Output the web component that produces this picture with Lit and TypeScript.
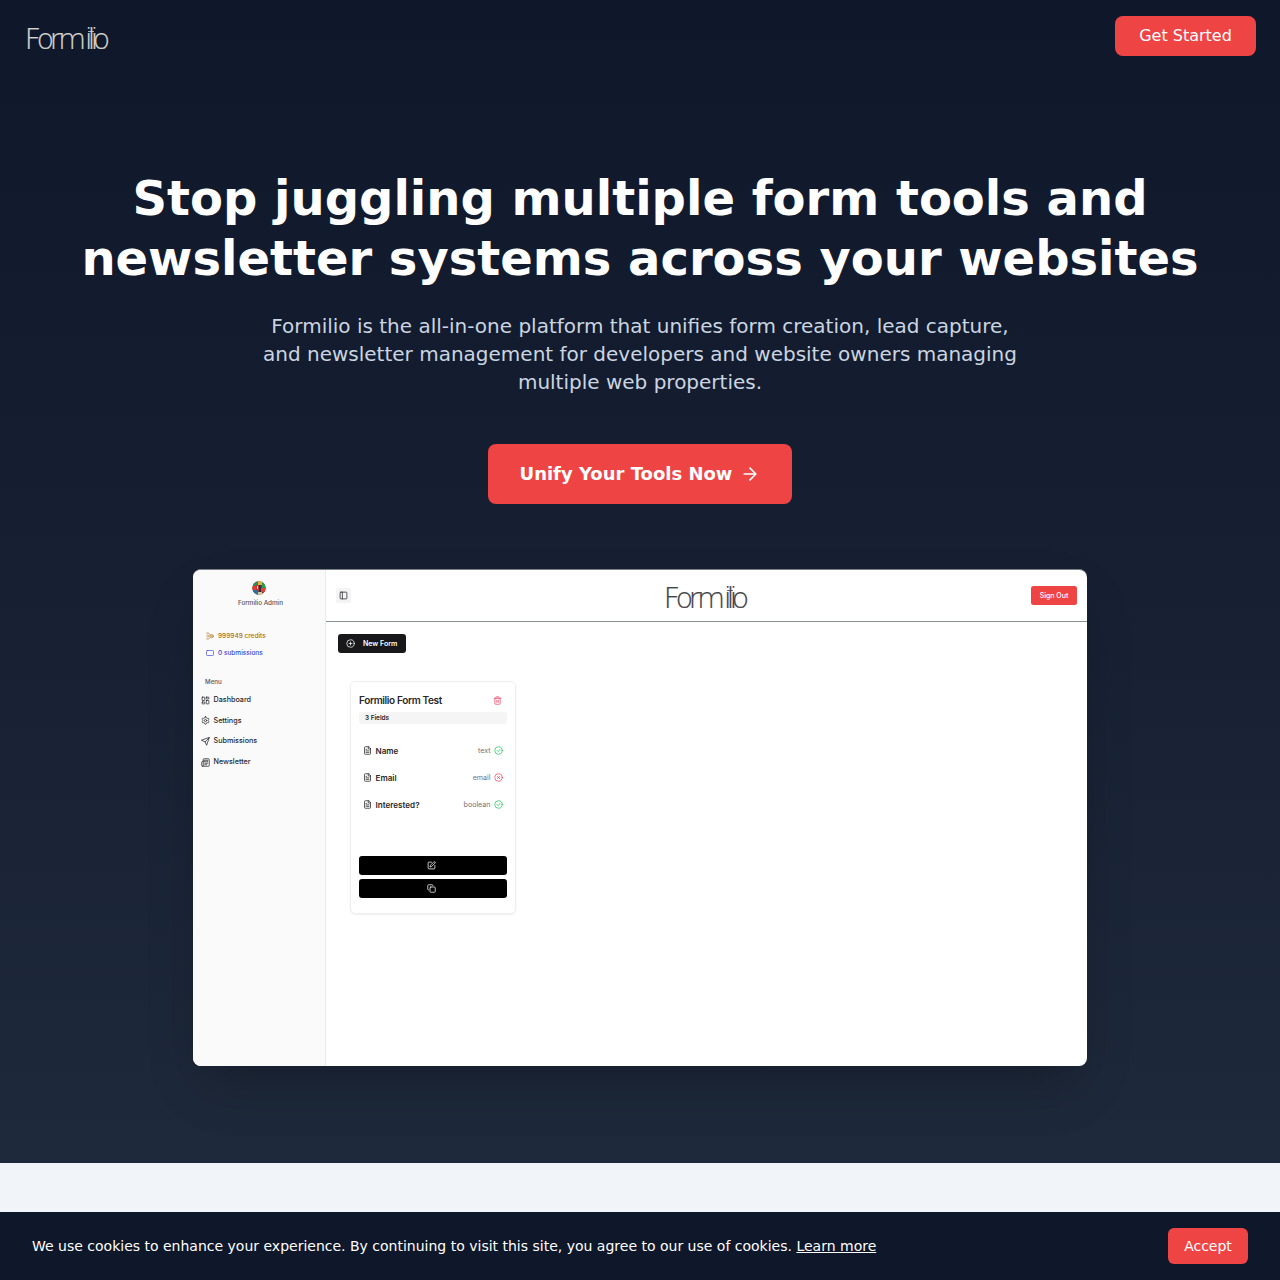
import { LitElement, html, css, svg } from "lit";
import { customElement, property } from "lit/decorators.js";

const ICONS: Record<string, any> = {
  arrow: svg`<path d="M5 12h14M12 5l7 7-7 7"/>`,
  panel: svg`<rect x="3" y="3" width="18" height="18" rx="2"/><path d="M9 3v18"/>`,
  plus: svg`<circle cx="12" cy="12" r="10"/><path d="M8 12h8M12 8v8"/>`,
  credits: svg`<circle cx="17" cy="12.500" r="5"/><path d="M2 3h4c4 0 3 4 6 5M2 21h5l5-4M2 12h3M6 8l4 4-4 4M17 11v3"/>`,
  ticket: svg`<rect x="1.500" y="4.500" width="21" height="15" rx="2.500"/>`,
  dashboard: svg`<rect x="3" y="3" width="7" height="9" rx="1"/><rect x="14" y="3" width="7" height="5" rx="1"/><rect x="14" y="12" width="7" height="9" rx="1"/><rect x="3" y="16" width="7" height="5" rx="1"/>`,
  settings: svg`<path d="M12.220 2h-.44a2 2 0 0 0-2 2v.18a2 2 0 0 1-1 1.730l-.43.25a2 2 0 0 1-2 0l-.15-.08a2 2 0 0 0-2.730.73l-.22.38a2 2 0 0 0 .73 2.730l.15.1a2 2 0 0 1 1 1.720v.51a2 2 0 0 1-1 1.740l-.15.09a2 2 0 0 0-.73 2.730l.22.38a2 2 0 0 0 2.730.73l.15-.08a2 2 0 0 1 2 0l.43.25a2 2 0 0 1 1 1.730V20a2 2 0 0 0 2 2h.44a2 2 0 0 0 2-2v-.18a2 2 0 0 1 1-1.730l.43-.25a2 2 0 0 1 2 0l.15.08a2 2 0 0 0 2.730-.73l.22-.39a2 2 0 0 0-.73-2.730l-.15-.08a2 2 0 0 1-1-1.740v-.5a2 2 0 0 1 1-1.740l.15-.09a2 2 0 0 0 .73-2.730l-.22-.38a2 2 0 0 0-2.730-.73l-.15.08a2 2 0 0 1-2 0l-.43-.25a2 2 0 0 1-1-1.730V4a2 2 0 0 0-2-2z"/><circle cx="12" cy="12" r="3"/>`,
  send: svg`<path d="m22 2-7 20-4-9-9-4ZM22 2 11 13"/>`,
  news: svg`<path d="M4 22h16a2 2 0 0 0 2-2V4a2 2 0 0 0-2-2H8a2 2 0 0 0-2 2v16a2 2 0 0 1-4 0v-9c0-1.100.9-2 2-2h2M18 14h-8M15 18h-5M10 6h8v4h-8Z"/>`,
  trash: svg`<path d="M3 6h18M19 6v14a2 2 0 0 1-2 2H7a2 2 0 0 1-2-2V6M8 6V4a2 2 0 0 1 2-2h4a2 2 0 0 1 2 2v2M10 11v6M14 11v6"/>`,
  file: svg`<path d="M15 2H6a2 2 0 0 0-2 2v16a2 2 0 0 0 2 2h12a2 2 0 0 0 2-2V7ZM14 2v6h6M16 13H8M16 17H8M10 9H8"/>`,
  check: svg`<circle cx="12" cy="12" r="10"/><path d="m8 12 3 3 5-6"/>`,
  cross: svg`<circle cx="12" cy="12" r="10"/><path d="m15 9-6 6M9 9l6 6"/>`,
  edit: svg`<path d="M12 3H5a2 2 0 0 0-2 2v14a2 2 0 0 0 2 2h14a2 2 0 0 0 2-2v-7M18.400 2.600a2.100 2.100 0 0 1 3 3L12 15l-4 1 1-4Z"/>`,
  copy: svg`<rect x="8" y="8" width="14" height="14" rx="2"/><path d="M4 16a2 2 0 0 1-2-2V4a2 2 0 0 1 2-2h10a2 2 0 0 1 2 2"/>`,
};

const icon = (name: string, size = 9) => html`<svg class="icon" width=${size} height=${size} viewBox="0 0 24 24"
  fill="none" stroke="currentColor" stroke-width="2" stroke-linecap="round" stroke-linejoin="round">${ICONS[name]}</svg>`;

@customElement("brand-logo")
class BrandLogo extends LitElement {
  static styles = css`
    :host { display: block; width: 84px; height: 30px; }
    svg { display: block; overflow: visible; }
    .word { font: 200 29px "DejaVu Sans", Lato, sans-serif; fill: currentColor; stroke: currentColor; stroke-width: 0.2; }
  `;
  render() {
    return html`<svg width="84" height="30" viewBox="0 0 84 30">
      <text class="word" y="25.200" x="-2.500 9.600 22.600 31 57.800 60.600 63.400 65.400">Formilio</text>
      <path d="M61 7.500h6" stroke="currentColor" stroke-width="0.800"/>
    </svg>`;
  }
}

@customElement("app-preview")
class AppPreview extends LitElement {
  static styles = css`
    :host { display: flex; box-sizing: border-box; width: 894px; height: 497px; border-radius: 8px; overflow: hidden; background: #fff; color: #27272a; font: 500 7.400px/10px Inter, sans-serif; text-align: left; border-top: 1px solid #7b8087; }
    .icon { display: block; flex: none; }
    .side { width: 133px; box-sizing: border-box; flex: none; background: #fafafa; border-right: 1px solid #e9eaec; }
    .user { display: flex; flex-direction: column; align-items: center; gap: 3px; padding: 11px 0 0 3px; font-size: 6.300px; color: #52525b; height: 56px; box-sizing: border-box; }
    .avatar { display: block; margin-right: 3px; }
    .stats { display: flex; flex-direction: column; gap: 7px; padding: 5px 0 0 12.500px; font-size: 6.500px; }
    .stat { display: flex; align-items: center; gap: 4.500px; }
    .gold { color: #a96f12; } .blue { color: #3546d8; }
    .caption { padding: 19px 0 0 12px; font-size: 6.200px; color: #52525b; }
    .menu { display: flex; flex-direction: column; gap: 10.700px; padding: 8px 0 0 8px; }
    .item { display: flex; align-items: center; gap: 3.500px; font-size: 7.200px; }
    .main { flex: 1; display: flex; flex-direction: column; }
    .bar { height: 52px; box-sizing: border-box; display: grid; grid-template-columns: 1fr 84px 1fr; align-items: center; border-bottom: 1px solid #8b9097; padding: 0 10px 0 10px; }
    .toggle { display: grid; place-items: center; width: 15px; height: 15px; background: #f4f4f5; border-radius: 2px; }
    .logo { color: #3f4447; position: relative; top: 2px; left: 1px; }
    .out { justify-self: end; background: #ef4444; color: #fff; border-radius: 2.500px; width: 46px; height: 19px; line-height: 19px; text-align: center; font-size: 7px; }
    .body { padding: 12px 0 0 12px; }
    .new { width: 68px; height: 19px; display: flex; align-items: center; gap: 8px; padding-left: 8px; box-sizing: border-box; border-radius: 3px; background: #18181b; color: #fff; font-size: 7px; font-weight: 600; }
    .card { width: 166px; height: 233px; box-sizing: border-box; margin: 28px 0 0 12px; padding: 13px 8px 0 8px; border: 1px solid #eeeeef; border-radius: 5px; box-shadow: 0 1px 2px #0001; }
    .head { display: flex; justify-content: space-between; align-items: center; font-size: 10px; font-weight: 600; letter-spacing: -0.350px; padding-right: 5px; }
    .red { color: #ef4461; } .green { color: #22c55e; }
    .count { height: 12px; line-height: 13px; margin-top: 7px; padding-left: 6px; background: #f5f5f5; border-radius: 3px; font-size: 6.400px; font-weight: 600; }
    .fields { display: flex; flex-direction: column; gap: 17px; padding: 21.500px 4px 0 4px; height: 128px; box-sizing: border-box; }
    .field { display: flex; align-items: center; gap: 3.500px; height: 10px; }
    .name { flex: 1; font-size: 8.100px; font-weight: 600; }
    .type { font-size: 7.100px; font-weight: 400; color: #71717a; }
    .action { display: grid; place-items: center; height: 19px; margin-top: 4px; padding-right: 4px; background: #000; color: #fff; border-radius: 3px; }
  `;
  @property({ attribute: false }) menu = [["dashboard", "Dashboard"], ["settings", "Settings"], ["send", "Submissions"], ["news", "Newsletter"]];
  @property({ attribute: false }) fields: any[] = [["Name", "text", true], ["Email", "email", false], ["Interested?", "boolean", true]];

  render() {
    return html`
      <div class="side">
        <div class="user">
          <svg class="avatar" width="14" height="14" viewBox="0 0 14 14">
            <clipPath id="round"><circle cx="7" cy="7" r="6.700"/></clipPath>
            <g clip-path="url(#round)">
              <rect width="14" height="14" fill="#7b3b2e"/><rect width="6" height="5" fill="#2f8a58"/><rect x="6" width="4" height="4" fill="#e2b33a"/><rect x="10" y="1" width="4" height="6" fill="#279b50"/>
              <rect y="5" width="4" height="4" fill="#df3a2c"/><rect x="4" y="4" width="3" height="6" fill="#c73431"/><rect x="7" y="4" width="2" height="7" fill="#23343d"/><rect x="9" y="7" width="5" height="4" fill="#dc4435"/>
              <rect x="1" y="9" width="5" height="5" fill="#2672a0"/><rect x="6" y="11" width="4" height="3" fill="#d9c9a0"/><rect x="5" y="5" width="1" height="3" fill="#f0e0c8"/>
            </g>
          </svg>
          <span>Formilio Admin</span>
        </div>
        <div class="stats">
          <div class="stat gold">${icon("credits", 8)}<span>999949 credits</span></div>
          <div class="stat blue">${icon("ticket", 8)}<span>0 submissions</span></div>
        </div>
        <div class="caption">Menu</div>
        <div class="menu">${this.menu.map(([i, t]) => html`<div class="item">${icon(i, 9)}<span>${t}</span></div>`)}</div>
      </div>
      <div class="main">
        <div class="bar">
          <div class="toggle">${icon("panel", 9)}</div>
          <brand-logo class="logo"></brand-logo>
          <div class="out">Sign Out</div>
        </div>
        <div class="body">
          <div class="new">${icon("plus", 9)}<span>New Form</span></div>
          <div class="card">
            <div class="head"><span>Formilio Form Test</span><span class="red">${icon("trash", 9)}</span></div>
            <div class="count">3 Fields</div>
            <div class="fields">${this.fields.map(([n, t, ok]) => html`
              <div class="field">${icon("file", 9)}<span class="name">${n}</span><span class="type">${t}</span>
                <span class=${ok ? "green" : "red"}>${icon(ok ? "check" : "cross", 9)}</span></div>`)}
            </div>
            <div class="action">${icon("edit", 9)}</div>
            <div class="action">${icon("copy", 9)}</div>
          </div>
        </div>
      </div>`;
  }
}

@customElement("app-root")
class AppRoot extends LitElement {
  static styles = css`
    :host { display: flex; flex-direction: column; height: 1280px; overflow: hidden; font-family: "DejaVu Sans", sans-serif; background: #f1f5f9; }
    .hero { height: 1163px; flex: none; box-sizing: border-box; background: linear-gradient(#0f172a, #1e293b); color: #fff; }
    .nav { display: flex; justify-content: space-between; align-items: flex-start; padding: 16px 24px 0; height: 72px; box-sizing: border-box; }
    .brand { margin: 8px 0 0 3px; color: #d6d3ce; }
    .start { width: 141px; height: 40px; line-height: 39px; text-align: center; background: #ef4444; border-radius: 8px; font-size: 16px; }
    .intro { padding-top: 96px; display: flex; flex-direction: column; align-items: center; text-align: center; }
    h1 { margin: 0; font-size: 48px; line-height: 60px; font-weight: 700; width: 1232px; }
    .lead { margin: 24px 0 48px; width: 768px; font-size: 20px; line-height: 28px; color: #cbd5e1; }
    .cta { display: flex; align-items: center; justify-content: center; gap: 8px; width: 304px; height: 60px; background: #ef4444; border-radius: 8px; font-size: 18px; line-height: 28px; font-weight: 700; }
    .label { padding-bottom: 1px; }
    .shot { margin-top: 65px; box-shadow: 0 25px 50px -12px #00000040; }
    .next { flex: 1; }
    .cookies { height: 68px; flex: none; display: flex; align-items: center; justify-content: space-between; padding: 0 32px; box-sizing: border-box; background: #0f172a; color: #fff; font-size: 14px; }
    .more { color: #fff; text-decoration: underline; }
    .accept { width: 80px; height: 36px; line-height: 36px; text-align: center; background: #ef4444; border-radius: 6px; }
  `;
  render() {
    return html`
      <section class="hero">
        <nav class="nav"><brand-logo class="brand"></brand-logo><div class="start">Get Started</div></nav>
        <div class="intro">
          <h1>Stop juggling multiple form tools and newsletter systems across your websites</h1>
          <p class="lead">Formilio is the all-in-one platform that unifies form creation, lead capture, and newsletter management for developers and website owners managing multiple web properties.</p>
          <div class="cta"><span class="label">Unify Your Tools Now</span>${icon("arrow", 20)}</div>
          <app-preview class="shot"></app-preview>
        </div>
      </section>
      <section class="next"></section>
      <footer class="cookies">
        <span>We use cookies to enhance your experience. By continuing to visit this site, you agree to our use of cookies. <a class="more">Learn more</a></span>
        <div class="accept">Accept</div>
      </footer>`;
  }
}
